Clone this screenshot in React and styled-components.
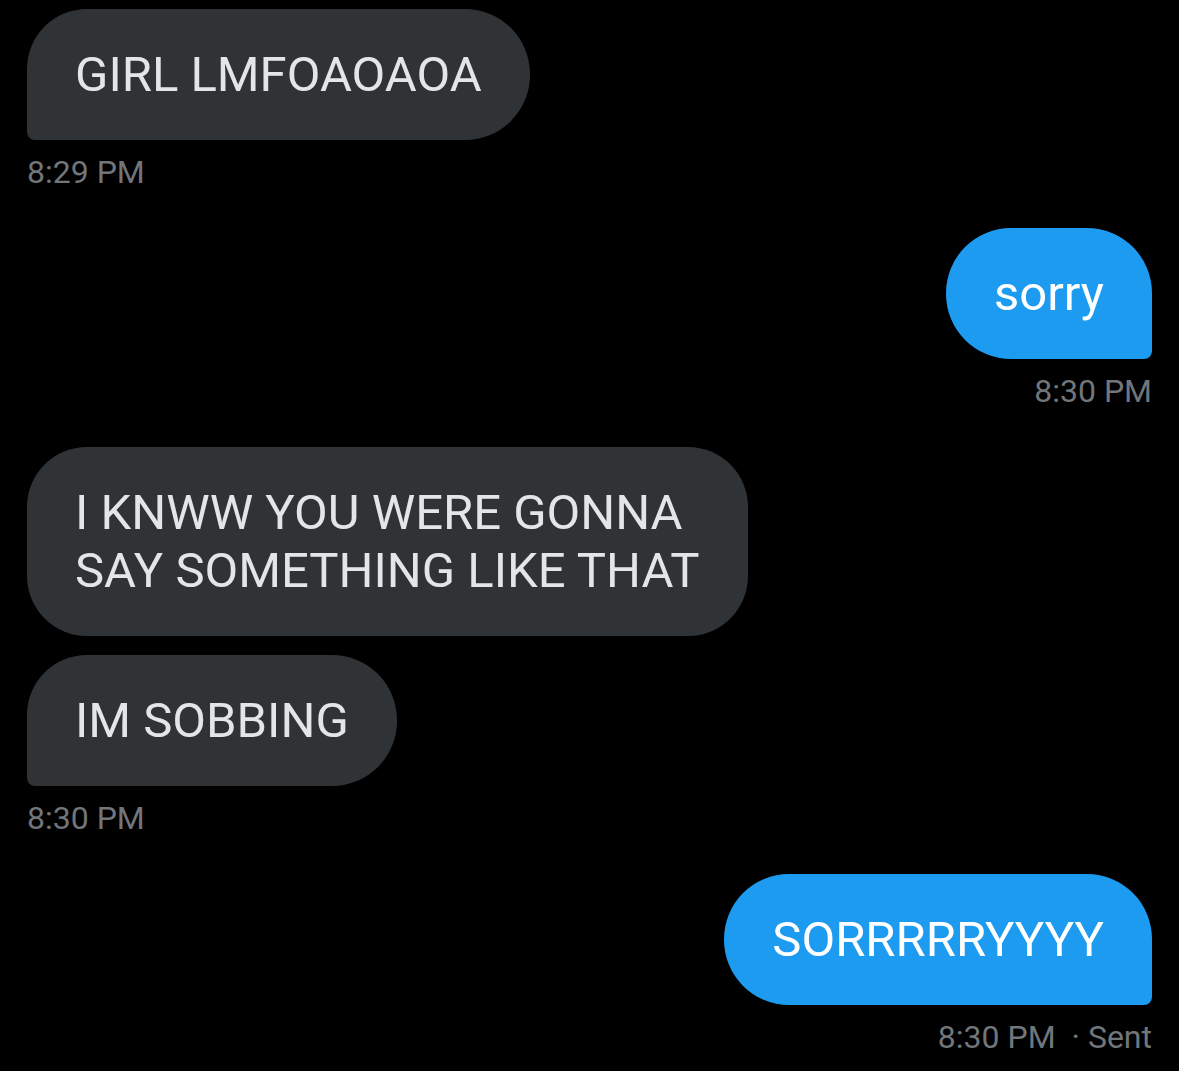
import styled, { createGlobalStyle } from "styled-components"

const GlobalStyle = createGlobalStyle`
    html, body {
        margin: 0;
        padding: 0;
        background: #000;
    }
    body {
        font-family: Roboto, "Liberation Sans", Arial, sans-serif;
        -webkit-font-smoothing: antialiased;
    }
`

const Thread = styled.div`
    display: flex;
    flex-direction: column;
    padding: 9px 27px;
    min-height: 1071px;
    box-sizing: border-box;
    background: #000;
`

const Group = styled.div`
    display: flex;
    flex-direction: column;
    align-items: ${(p) => (p.$sent ? "flex-end" : "flex-start")};

    & + & {
        margin-top: 37px;
    }
`

const Bubble = styled.div`
    box-sizing: border-box;
    padding: 37px 48px 36px 48px;
    font-size: 49px;
    line-height: 58px;
    white-space: pre-line;
    color: ${(p) => (p.$sent ? "#ffffff" : "#e3e5e6")};
    background: ${(p) => (p.$sent ? "#1d9bf0" : "#2f3336")};
    border-radius: ${(p) =>
        !p.$tail ? "60px" : p.$sent ? "65px 65px 8px 65px" : "60px 65px 65px 8px"};

    & + & {
        margin-top: 19px;
    }
`

const Stamp = styled.div`
    margin-top: 13px;
    font-size: 32px;
    line-height: 38px;
    color: #71767b;
    white-space: nowrap;
`

const Sent = styled.span`
    margin-left: 16px;
`

const messages = [
    { sent: false, texts: ["GIRL LMFOAOAOA"], time: "8:29 PM" },
    { sent: true, texts: ["sorry"], time: "8:30 PM" },
    {
        sent: false,
        texts: ["I KNWW YOU WERE GONNA\nSAY SOMETHING LIKE THAT", "IM SOBBING"],
        time: "8:30 PM",
    },
    { sent: true, texts: ["SORRRRRYYYY"], time: "8:30 PM", status: "Sent" },
]

const App = () => {
    return (
        <>
            <GlobalStyle />
            <Thread>
                {messages.map((m, i) => (
                    <Group key={i} $sent={m.sent}>
                        {m.texts.map((t, j) => (
                            <Bubble key={j} $sent={m.sent} $tail={j === m.texts.length - 1}>
                                {t}
                            </Bubble>
                        ))}
                        <Stamp>
                            {m.time}
                            {m.status && <Sent>· {m.status}</Sent>}
                        </Stamp>
                    </Group>
                ))}
            </Thread>
        </>
    )
}

export default App
